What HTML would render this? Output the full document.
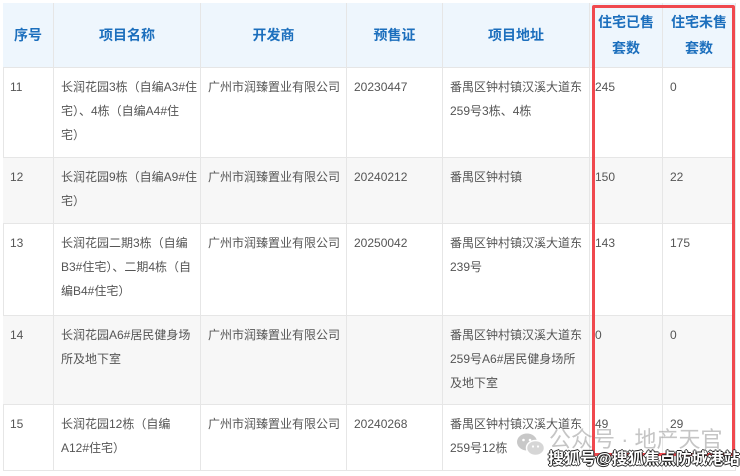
<!DOCTYPE html>
<html><head><meta charset="utf-8"><style>
body{margin:0;width:740px;height:476px;background:#fff;position:relative;overflow:hidden;font-family:"Liberation Sans","Noto Sans CJK SC",sans-serif;}
.c{position:absolute;box-sizing:border-box;border-right:1px solid #e6e6e6;border-bottom:1px solid #e6e6e6;font-size:12px;color:#555;line-height:24px;padding:7px 0 0 7px;}
.h{background:#eef6fd;color:#1c6fbd;font-weight:bold;font-size:14px;text-align:center;padding:0;display:flex;align-items:center;justify-content:center;line-height:26px;}
.g{background:#f7f7f7;}
</style></head><body>
<div style="position:absolute;left:3px;top:3px;width:733px;height:468px;border-left:1px solid #e6e6e6;border-top:1px solid #e6e6e6;box-sizing:border-box"></div>
<div class="c h" style="left:3px;top:3px;width:51px;height:65px">序号</div>
<div class="c h" style="left:54px;top:3px;width:147px;height:65px">项目名称</div>
<div class="c h" style="left:201px;top:3px;width:146px;height:65px">开发商</div>
<div class="c h" style="left:347px;top:3px;width:96px;height:65px">预售证</div>
<div class="c h" style="left:443px;top:3px;width:147px;height:65px">项目地址</div>
<div class="c h" style="left:590px;top:3px;width:73px;height:65px">住宅已售<br>套数</div>
<div class="c h" style="left:663px;top:3px;width:73px;height:65px">住宅未售<br>套数</div>

<div class="c" style="left:3px;top:68px;width:51px;height:90px">11</div>
<div class="c" style="left:54px;top:68px;width:147px;height:90px">长润花园3栋（自编A3#住<br>宅）、4栋（自编A4#住<br>宅）</div>
<div class="c" style="left:201px;top:68px;width:146px;height:90px;white-space:nowrap">广州市润臻置业有限公司</div>
<div class="c" style="left:347px;top:68px;width:96px;height:90px">20230447</div>
<div class="c" style="left:443px;top:68px;width:147px;height:90px">番禺区钟村镇汉溪大道东<br>259号3栋、4栋</div>
<div class="c" style="left:590px;top:68px;width:73px;height:90px;padding-left:5px">245</div>
<div class="c" style="left:663px;top:68px;width:73px;height:90px">0</div>

<div class="c g" style="left:3px;top:158px;width:51px;height:66px">12</div>
<div class="c g" style="left:54px;top:158px;width:147px;height:66px">长润花园9栋（自编A9#住<br>宅）</div>
<div class="c g" style="left:201px;top:158px;width:146px;height:66px;white-space:nowrap">广州市润臻置业有限公司</div>
<div class="c g" style="left:347px;top:158px;width:96px;height:66px">20240212</div>
<div class="c g" style="left:443px;top:158px;width:147px;height:66px">番禺区钟村镇</div>
<div class="c g" style="left:590px;top:158px;width:73px;height:66px;padding-left:5px">150</div>
<div class="c g" style="left:663px;top:158px;width:73px;height:66px">22</div>

<div class="c" style="left:3px;top:224px;width:51px;height:92px">13</div>
<div class="c" style="left:54px;top:224px;width:147px;height:92px">长润花园二期3栋（自编<br>B3#住宅）、二期4栋（自<br>编B4#住宅）</div>
<div class="c" style="left:201px;top:224px;width:146px;height:92px;white-space:nowrap">广州市润臻置业有限公司</div>
<div class="c" style="left:347px;top:224px;width:96px;height:92px">20250042</div>
<div class="c" style="left:443px;top:224px;width:147px;height:92px">番禺区钟村镇汉溪大道东<br>239号</div>
<div class="c" style="left:590px;top:224px;width:73px;height:92px;padding-left:5px">143</div>
<div class="c" style="left:663px;top:224px;width:73px;height:92px">175</div>

<div class="c g" style="left:3px;top:316px;width:51px;height:89px">14</div>
<div class="c g" style="left:54px;top:316px;width:147px;height:89px">长润花园A6#居民健身场<br>所及地下室</div>
<div class="c g" style="left:201px;top:316px;width:146px;height:89px;white-space:nowrap">广州市润臻置业有限公司</div>
<div class="c g" style="left:347px;top:316px;width:96px;height:89px"></div>
<div class="c g" style="left:443px;top:316px;width:147px;height:89px">番禺区钟村镇汉溪大道东<br>259号A6#居民健身场所<br>及地下室</div>
<div class="c g" style="left:590px;top:316px;width:73px;height:89px;padding-left:5px">0</div>
<div class="c g" style="left:663px;top:316px;width:73px;height:89px">0</div>

<div class="c" style="left:3px;top:405px;width:51px;height:66px">15</div>
<div class="c" style="left:54px;top:405px;width:147px;height:66px">长润花园12栋（自编<br>A12#住宅）</div>
<div class="c" style="left:201px;top:405px;width:146px;height:66px;white-space:nowrap">广州市润臻置业有限公司</div>
<div class="c" style="left:347px;top:405px;width:96px;height:66px">20240268</div>
<div class="c" style="left:443px;top:405px;width:147px;height:66px">番禺区钟村镇汉溪大道东<br>259号12栋</div>
<div class="c" style="left:590px;top:405px;width:73px;height:66px;padding-left:5px">49</div>
<div class="c" style="left:663px;top:405px;width:73px;height:66px">29</div>

<div style="position:absolute;left:592px;top:5px;width:143px;height:451px;border:3px solid #f0484e;box-sizing:border-box;border-radius:2px"></div>

<svg style="position:absolute;left:516px;top:432px" width="30" height="26" viewBox="0 0 30 26"><ellipse cx="11" cy="10" rx="10" ry="8.5" fill="#c8c8c8"/><ellipse cx="19.5" cy="16" rx="9" ry="7.5" fill="#d6d6d6" stroke="#fff" stroke-width="1.5"/><circle cx="7.5" cy="8" r="1.3" fill="#fff"/><circle cx="14" cy="8" r="1.3" fill="#fff"/><circle cx="17" cy="14.5" r="1.1" fill="#fff"/><circle cx="22" cy="14.5" r="1.1" fill="#fff"/></svg>
<div style="position:absolute;left:549px;top:427px;font-size:22px;color:rgba(150,150,150,.55);white-space:nowrap;line-height:26px">公众号 · 地产天官</div>
<div style="position:absolute;left:548px;top:449px;font-size:16px;font-weight:bold;color:#fff;white-space:nowrap;line-height:22px;text-shadow:-1px 0 #222,1px 0 #222,0 -1px #222,0 1px #222">搜狐号@搜狐焦点防城港站</div>
</body></html>
